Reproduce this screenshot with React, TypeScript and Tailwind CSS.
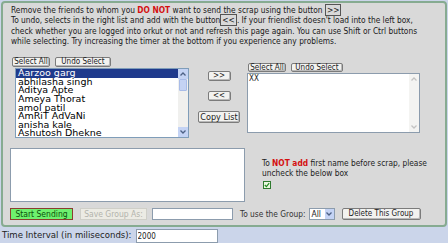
import { useState } from "react";

const friends = [
  "Aarzoo garg",
  "abhilasha singh",
  "Aditya Apte",
  "Ameya Thorat",
  "amol patil",
  "AmRiT AdVaNi",
  "anisha kale",
  "Ashutosh Dhekne",
  "Ashwini Dhandhar",
];

function SmallButton({ children, className = "" }: { children: React.ReactNode; className?: string }) {
  return (
    <button
      className={
        "flex flex-none items-center justify-center whitespace-nowrap border border-[#7b7b7b] rounded-[2px] bg-[#f2f2f0] text-[8px] leading-none text-[#222] shadow-[inset_-1px_-1px_0_#b9b9b9] " +
        className
      }
    >
      {children}
    </button>
  );
}

function ScrollBar({ disabled }: { disabled?: boolean }) {
  const arrow = disabled ? "#c3c3c3" : "#4d6185";
  return (
    <div className={"w-[10px] flex-none h-full flex flex-col " + (disabled ? "bg-[#f4f4f2]" : "bg-[#f0f0ee]")}>
      <div className={"h-[10px] flex items-center justify-center " + (disabled ? "bg-[#f4f4f2]" : "bg-[#c4d3f4]")}>
        <svg width="6" height="4" viewBox="0 0 6 4">
          <path d="M0.5 3.5 L3 1 L5.5 3.5" stroke={arrow} strokeWidth="1.3" fill="none" />
        </svg>
      </div>
      <div className="flex-1">
        {!disabled && <div className="h-[12px] mx-[1px] bg-[#c4d3f4] border border-[#a9bce8] rounded-[1px]" />}
      </div>
      <div className={"h-[10px] flex items-center justify-center " + (disabled ? "bg-[#f4f4f2]" : "bg-[#c4d3f4]")}>
        <svg width="6" height="4" viewBox="0 0 6 4">
          <path d="M0.5 0.5 L3 3 L5.5 0.5" stroke={arrow} strokeWidth="1.3" fill="none" />
        </svg>
      </div>
    </div>
  );
}

export default function App() {
  const [checked, setChecked] = useState(true);
  const [interval, setInterval] = useState("2000");

  return (
    <div
      className="w-[448px] h-[243px] overflow-hidden bg-[#cbd5ea] text-[#222]"
      style={{ fontFamily: '"DejaVu Sans Condensed", "DejaVu Sans", sans-serif' }}
    >
      <div className="ml-[1px] mt-[1px] w-[446px] h-[226px] flex-none overflow-hidden border-2 border-[#86ab91] rounded-[4px] bg-[#d9d9d9] flex flex-col">
        <div className="ml-[8px] mt-[2px] text-[8.3px] leading-[10.3px] text-[#1a1a1a] whitespace-nowrap">
          <div>
            Remove the friends to whom you <b className="text-[#d41010]">DO NOT</b> want to send the scrap using the button{" "}
            <span className="border border-[#555] px-[1px]">&gt;&gt;</span>
          </div>
          <div>
            To undo, selects in the right list and add with the button
            <span className="border border-[#555] px-[1px]">&lt;&lt;</span>. If your friendlist doesn't load into the left box,
          </div>
          <div>check whether you are logged into orkut or not and refresh this page again. You can use Shift or Ctrl buttons</div>
          <div>while selecting. Try increasing the timer at the bottom if you experience any problems.</div>
        </div>

        <div className="flex mt-[11px]">
          <div className="ml-[9px] flex flex-col">
            <div className="flex gap-[5px]">
              <SmallButton className="w-[38px] h-[10px]">Select All</SmallButton>
              <SmallButton className="w-[56px] h-[10px]">Undo Select</SmallButton>
            </div>
            <div className="ml-[3px] mt-[1px] w-[174px] h-[70px] border border-[#7f9db9] bg-white flex overflow-hidden">
              <div
                className="flex-1 text-[9.5px] leading-[8.6px] overflow-hidden"
                style={{ fontFamily: '"DejaVu Sans", sans-serif' }}
              >
                {friends.map((f, i) => (
                  <div
                    key={f}
                    className={
                      "pl-[2px] h-[8.6px] whitespace-nowrap " + (i === 0 ? "bg-[#1f3a8c] text-white" : "text-black")
                    }
                  >
                    {f}
                  </div>
                ))}
              </div>
              <ScrollBar />
            </div>
          </div>

          <div className="ml-[9px] w-[42px] flex flex-col items-center pt-[14px]">
            <SmallButton className="w-[23px] h-[10px]">&gt;&gt;</SmallButton>
            <SmallButton className="w-[23px] h-[10px] mt-[10px]">&lt;&lt;</SmallButton>
            <SmallButton className="w-[42px] h-[12px] mt-[10px] text-[9px]">Copy List</SmallButton>
          </div>

          <div className="ml-[7px] flex flex-col pt-[6px]">
            <div className="flex gap-[5px] ml-[1px]">
              <SmallButton className="w-[38px] h-[9px]">Select All</SmallButton>
              <SmallButton className="w-[52px] h-[9px]">Undo Select</SmallButton>
            </div>
            <div className="mt-[1px] w-[173px] h-[60px] border border-[#8c9cad] bg-white flex">
              <div className="flex-1 text-[8px] leading-[10px] pl-[1px]">XX</div>
              <ScrollBar disabled />
            </div>
          </div>
        </div>

        <div className="flex mt-[10px]">
          <div className="ml-[7px] w-[235px] h-[54px] flex-none border border-[#8c9cad] bg-white" />
          <div className="ml-[17px] pt-[10px] text-[8.3px] leading-[10px] text-[#222] whitespace-nowrap">
            <div>
              To <b className="text-[#d41010]">NOT add</b> first name before scrap, please
            </div>
            <div>uncheck the below box</div>
            <button
              onClick={() => setChecked(!checked)}
              className="mt-[3px] ml-[1px] w-[8px] h-[8px] border border-[#2f7a2f] bg-[#eaf7e0] flex items-center justify-center"
            >
              {checked && (
                <svg width="6" height="6" viewBox="0 0 6 6">
                  <path d="M0.8 3 L2.4 4.6 L5.2 1.2" stroke="#228a22" strokeWidth="1.2" fill="none" />
                </svg>
              )}
            </button>
          </div>
        </div>

        <div className="flex items-center mt-[6px] ml-[7px] h-[12px] text-[8.3px] whitespace-nowrap">
          <button className="flex-none w-[63px] h-[12px] bg-[#6ef06e] border border-[#8a3e2e] text-[#0c520c] text-[8.5px] leading-none">
            Start Sending
          </button>
          <button className="flex-none ml-[7px] w-[67px] h-[12px] bg-[#ecebe4] border border-[#cfcfc8] text-[#b3b3ac] text-[8.5px] leading-none">
            Save Group As:
          </button>
          <div className="flex-none ml-[5px] w-[81px] h-[12px] border border-[#8c9cad] bg-white" />
          <span className="ml-[7px] text-[#333]">To use the Group:</span>
          <div className="flex-none ml-[3px] w-[26px] h-[12px] border border-[#8c9cad] bg-white flex items-center">
            <span className="flex-1 pl-[2px] text-[8.5px]">All</span>
            <div className="w-[9px] h-full bg-[#c4d3f4] flex items-center justify-center">
              <svg width="6" height="4" viewBox="0 0 6 4">
                <path d="M0.5 0.5 L3 3 L5.5 0.5" stroke="#4d6185" strokeWidth="1.3" fill="none" />
              </svg>
            </div>
          </div>
          <SmallButton className="ml-[7px] w-[79px] h-[12px] text-[8.5px]">Delete This Group</SmallButton>
        </div>
      </div>

      <div className="flex items-center h-[16px] ml-[2px] text-[9.5px] whitespace-nowrap">
        <span className="text-[#222]">Time Interval (in miliseconds):</span>
        <input
          value={interval}
          onChange={(e) => setInterval(e.target.value)}
          className="ml-[4px] w-[82px] h-[14px] mt-[2px] border border-[#8c9cad] bg-white text-[8px] px-[1px] outline-none"
        />
      </div>
    </div>
  );
}
